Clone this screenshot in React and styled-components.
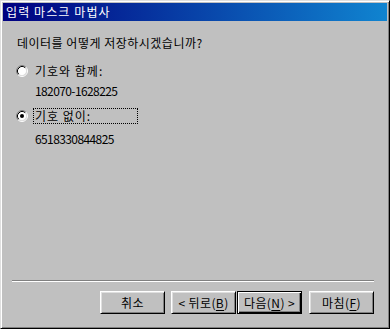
import React, { useState } from 'react';
import styled, { createGlobalStyle } from 'styled-components';

const GlobalStyle = createGlobalStyle`
  html, body {
    margin: 0;
    padding: 0;
    background: #c0c0c0;
    overflow: hidden;
  }
  body {
    font-family: "Noto Sans CJK KR", "Noto Sans", sans-serif;
    font-size: 12px;
    letter-spacing: 0.8px;
    color: #000;
  }
`;

const Win = {
  face: '#c0c0c0',
  light: '#dfdfdf',
  white: '#ffffff',
  shadow: '#808080',
  dark: '#000000',
};

export default function App() {
  const [choice, setChoice] = useState('plain');

  return (
    <>
      <GlobalStyle />
      <Window>
        <TitleBar>
          <Title>입력 마스크 마법사</Title>
        </TitleBar>
        <Body>
          <Question>데이터를 어떻게 저장하시겠습니까?</Question>
          <Option onClick={() => setChoice('symbols')}>
            <Radio checked={choice === 'symbols'} />
            <Label $focused={choice === 'symbols'}>기호와 함께:</Label>
          </Option>
          <Sample $gap={5}>182070-1628225</Sample>
          <Option $top={10} onClick={() => setChoice('plain')}>
            <Radio checked={choice === 'plain'} />
            <Label $focused={choice === 'plain'}>기호 없이:</Label>
          </Option>
          <Sample $gap={8}>6518330844825</Sample>
        </Body>
        <Footer>
          <Separator />
          <Buttons>
            <Button>취소</Button>
            <Button $gap={6}>
              &lt; 뒤로(<u>B</u>)
            </Button>
            <Button $gap={1} $default>
              다음(<u>N</u>) &gt;
            </Button>
            <Button $gap={7}>
              마침(<u>F</u>)
            </Button>
          </Buttons>
        </Footer>
      </Window>
    </>
  );
}

function Radio({ checked }) {
  return (
    <RadioBox>
      <svg width='12' height='12' viewBox='0 0 12 12'>
        <circle cx='6' cy='6' r='4.5' fill={Win.white} />
        <path d='M2.11 9.89 A5.5 5.5 0 0 1 9.89 2.11' fill='none' stroke={Win.shadow} />
        <path d='M9.89 2.11 A5.5 5.5 0 0 1 2.11 9.89' fill='none' stroke={Win.white} />
        <path d='M2.82 9.18 A4.5 4.5 0 0 1 9.18 2.82' fill='none' stroke={Win.dark} />
        <path d='M9.18 2.82 A4.5 4.5 0 0 1 2.82 9.18' fill='none' stroke={Win.light} />
        {checked && <circle cx='6' cy='6' r='2' fill={Win.dark} />}
      </svg>
    </RadioBox>
  );
}

const Window = styled.div`
  display: flex;
  flex-direction: column;
  box-sizing: border-box;
  width: 390px;
  height: 329px;
  padding: 2px;
  background: ${Win.face};
  border: 1px solid;
  border-color: ${Win.light} ${Win.dark} ${Win.dark} ${Win.light};
  box-shadow: inset 1px 1px ${Win.white}, inset -1px -1px ${Win.shadow};
`;

const TitleBar = styled.div`
  display: flex;
  align-items: center;
  height: 18px;
  padding: 0 3px;
  background: linear-gradient(to right, #000080, #1084d0);
`;

const Title = styled.span`
  color: ${Win.white};
  line-height: 18px;
  letter-spacing: 1.1px;
  white-space: nowrap;
`;

const Body = styled.div`
  display: flex;
  flex-direction: column;
  align-items: flex-start;
  padding: 0 13px;
`;

const Question = styled.div`
  margin: 15px 0 13px 1px;
  line-height: 14px;
  letter-spacing: 0.5px;
  white-space: nowrap;
`;

const Option = styled.div`
  display: flex;
  align-items: center;
  gap: 5px;
  height: 16px;
  margin-top: ${props => props.$top || 0}px;
  cursor: default;
`;

const RadioBox = styled.span`
  display: flex;
  width: 12px;
  height: 12px;
`;

const Label = styled.span`
  box-sizing: border-box;
  width: 105px;
  height: 16px;
  padding-left: 2px;
  line-height: 15px;
  letter-spacing: 1px;
  white-space: nowrap;
  outline: ${props => (props.$focused ? `1px dotted ${Win.dark}` : 'none')};
  outline-offset: -1px;
`;

const Sample = styled.div`
  margin: ${props => props.$gap}px 0 0 19px;
  line-height: 14px;
  letter-spacing: -0.6px;
  white-space: nowrap;
`;

const Footer = styled.div`
  display: flex;
  flex-direction: column;
  margin-top: auto;
  padding: 0 13px 12px 9px;
`;

const Separator = styled.div`
  height: 0;
  border-top: 1px solid ${Win.shadow};
  border-bottom: 1px solid ${Win.white};
`;

const Buttons = styled.div`
  display: flex;
  justify-content: flex-end;
  margin-top: 9px;
`;

const Button = styled.button`
  box-sizing: border-box;
  width: 65px;
  height: 23px;
  margin-left: ${props => props.$gap || 0}px;
  padding: 0;
  font: inherit;
  letter-spacing: 0.4px;
  color: ${Win.dark};
  background: ${Win.face};
  border: 1px solid;
  border-color: ${props =>
    props.$default
      ? Win.dark
      : `${Win.white} ${Win.dark} ${Win.dark} ${Win.white}`};
  box-shadow: ${props =>
    props.$default
      ? `inset 1px 1px ${Win.white}, inset -1px -1px ${Win.dark}, inset -2px -2px ${Win.shadow}`
      : `inset 1px 1px ${Win.light}, inset -1px -1px ${Win.shadow}`};
  border-radius: 0;
  white-space: nowrap;

  u {
    text-decoration-thickness: 1px;
    text-underline-offset: 2px;
  }
`;
